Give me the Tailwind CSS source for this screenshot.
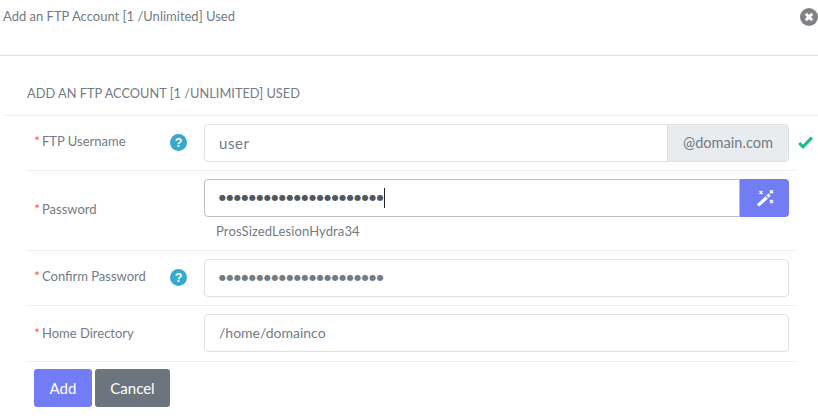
<!DOCTYPE html>
<html>
<head>
<meta charset="utf-8">
<script src="https://cdn.jsdelivr.net/npm/@tailwindcss/browser@4"></script>
</head>
<body class="bg-white overflow-hidden font-['Lato','Open_Sans',sans-serif] text-[#737b84]">
<div class="w-[818px] h-[419px] overflow-hidden">
  <header class="h-[56px] border-b border-[#dee2e6] pl-[3px] pt-[7px] flex justify-between items-start">
    <h1 class="text-[13px] leading-[18px] font-normal">Add an FTP Account [1 /Unlimited] Used</h1>
    <svg class="w-[18px] h-[18px] mt-[1px]" viewBox="0 0 18 18"><circle cx="9" cy="9" r="9" fill="#808285"/><path d="M5.8 5.8l6.4 6.4M12.2 5.8l-6.4 6.4" stroke="#fff" stroke-width="3"/></svg>
  </header>
  <h2 class="h-[60px] ml-[2px] pl-[25px] pt-[29px] text-[12.8px] leading-[16px] font-normal border-b border-[#eef0f3]">ADD AN FTP ACCOUNT [1 /UNLIMITED] USED</h2>
  <form class="ml-[26px] w-[770px]">
    <div class="h-[55px] flex pt-[8px] border-b border-[#eef0f3]">
      <label class="w-[161px] shrink-0 pl-[8px] pt-[8px] text-[13px] leading-[18px] flex justify-between items-start"><span><span class="text-[#f1556c] text-[14px] mr-[2px]">*</span>FTP Username</span><svg class="w-[17px] h-[17px] mt-[2px]" viewBox="0 0 17 17"><circle cx="8.5" cy="8.5" r="8.5" fill="#35a9d1"/><text x="8.5" y="13" text-anchor="middle" font-size="12.5" font-weight="700" fill="#fff" font-family="Liberation Sans">?</text></svg></label>
      <div class="ml-[17px] w-[585px] shrink-0 h-[38px] flex">
        <div class="flex-1 h-full border border-[#dee2e6] rounded-l-[4px] pl-[14px] text-[15px] tracking-[0.55px] leading-[36px]">user</div>
        <div class="w-[122px] h-full bg-[#e9ecef] border border-[#dee2e6] -ml-px rounded-r-[4px] text-center text-[14.6px] leading-[36px]">@domain.com</div>
      </div>
      <svg class="w-[15px] h-[13px] ml-[9px] mt-[12px] shrink-0" viewBox="0 0 15 13"><path d="M1.2 7l3.8 3.8L13.8 1.6" fill="none" stroke="#1abc8c" stroke-width="3"/></svg>
    </div>
    <div class="h-[80px] flex pt-[8px] border-b border-[#eef0f3]">
      <label class="w-[161px] shrink-0 pl-[8px] pt-[21px] text-[13px] leading-[18px]"><span class="text-[#f1556c] text-[14px] mr-[2px]">*</span>Password</label>
      <div class="ml-[17px] w-[585px] shrink-0">
        <div class="h-[38px] flex">
          <div class="flex-1 h-full border border-[#b9bfc6] rounded-l-[4px] pl-[14px] text-[#50575e] flex items-center"><span class="text-[8px] tracking-[0.53px] font-['DejaVu_Sans',sans-serif] leading-none">●●●●●●●●●●●●●●●●●●●●●●</span><span class="w-px h-[20px] bg-[#222]"></span></div>
          <div class="w-[49px] h-full bg-[#727cf5] rounded-r-[4px] flex items-center justify-center">
            <svg class="w-[18px] h-[17px]" viewBox="0 0 18 17"><path d="M0.8 14.4L9.6 6.2l2.4 2.4L3.2 16.6z" fill="#fff"/><path d="M9.8 7.8l1.6-1.6" stroke="#727cf5" stroke-width="0.8"/><path d="M10.2 5.4L12.4 3.4l2.2 2.2-2 2.2z" fill="#fff"/><g stroke="#fff" stroke-width="1.4"><path d="M3.5 1l3 3M6.5 1l-3 3M14 0.2l3 3M17 0.2l-3 3M14 10l3 3M17 10l-3 3"/></g></svg>
          </div>
        </div>
        <p class="pl-[12px] mt-[6px] text-[13px] tracking-[0.12px] leading-[16px]">ProsSizedLesionHydra34</p>
      </div>
    </div>
    <div class="h-[55px] flex pt-[8px] border-b border-[#eef0f3]">
      <label class="w-[161px] shrink-0 pl-[8px] pt-[8px] text-[13px] leading-[18px] flex justify-between items-start"><span><span class="text-[#f1556c] text-[14px] mr-[2px]">*</span>Confirm Password</span><svg class="w-[17px] h-[17px] mt-[2px]" viewBox="0 0 17 17"><circle cx="8.5" cy="8.5" r="8.5" fill="#35a9d1"/><text x="8.5" y="13" text-anchor="middle" font-size="12.5" font-weight="700" fill="#fff" font-family="Liberation Sans">?</text></svg></label>
      <div class="ml-[17px] w-[585px] shrink-0 h-[38px] border border-[#dee2e6] rounded-[4px] pl-[14px] flex items-center"><span class="text-[8px] tracking-[0.53px] font-['DejaVu_Sans',sans-serif] leading-none">●●●●●●●●●●●●●●●●●●●●●●</span></div>
    </div>
    <div class="h-[56px] flex pt-[8px] border-b border-[#eef0f3]">
      <label class="w-[161px] shrink-0 pl-[8px] pt-[10px] text-[13px] leading-[18px]"><span class="text-[#f1556c] text-[14px] mr-[2px]">*</span>Home Directory</label>
      <div class="ml-[17px] w-[585px] shrink-0 h-[38px] border border-[#dee2e6] rounded-[4px] pl-[14px] text-[14px] leading-[36px]">/home/domainco</div>
    </div>
    <div class="flex gap-[3px] pl-[8px] pt-[7px]">
      <button type="button" class="w-[58px] h-[38px] rounded-[3px] bg-[#727cf5] text-white text-[15px]">Add</button>
      <button type="button" class="w-[75px] h-[38px] rounded-[3px] bg-[#6c757d] text-white text-[15px]">Cancel</button>
    </div>
  </form>
</div>
</body>
</html>
